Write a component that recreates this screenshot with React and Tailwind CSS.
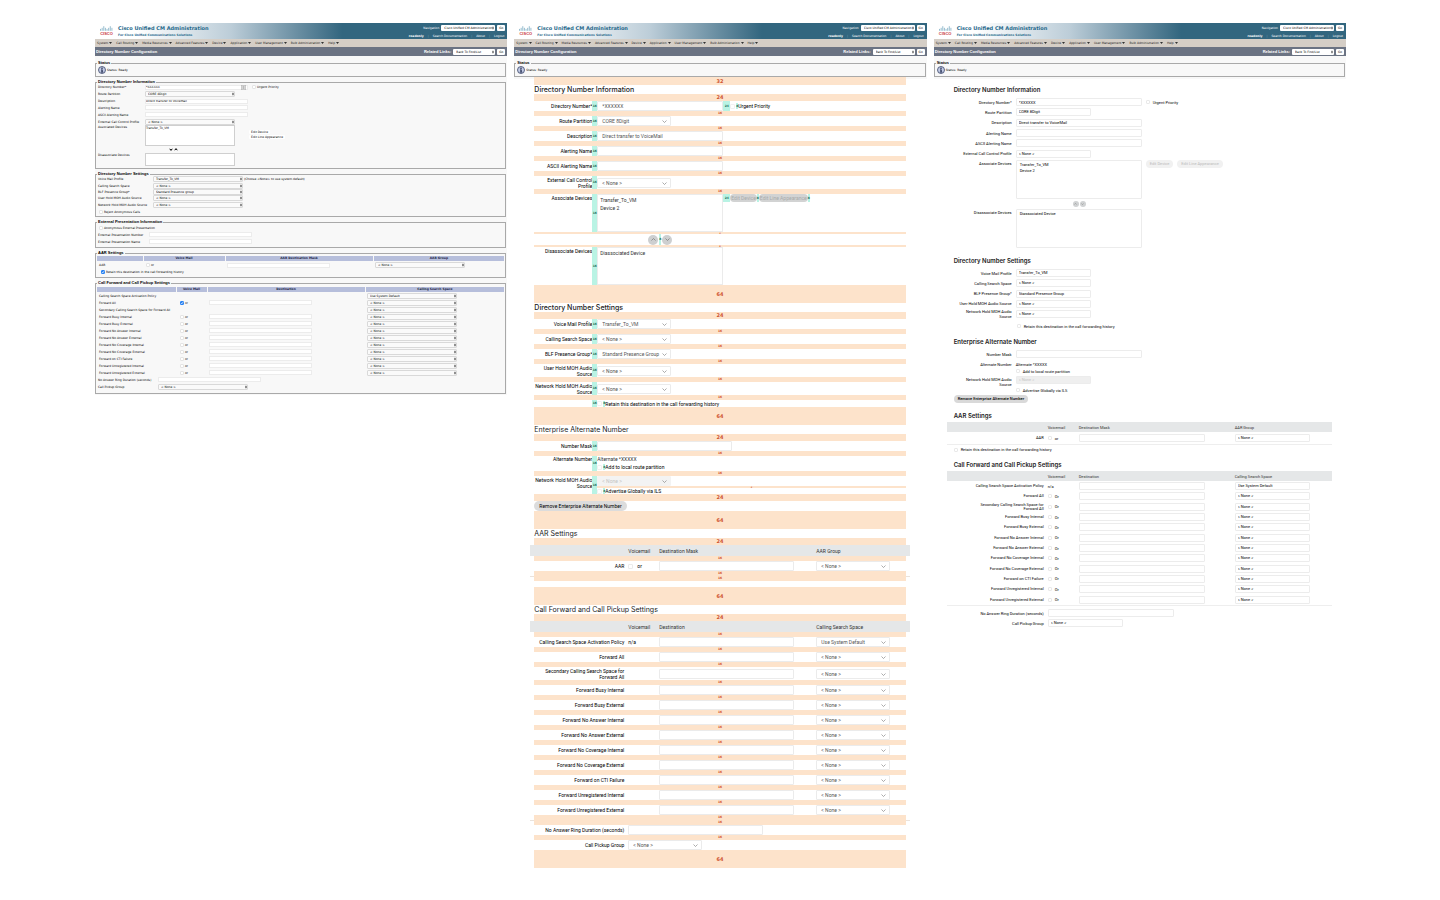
import React, { useId } from "react";

const MENUS = [
  "System", "Call Routing", "Media Resources", "Advanced Features", "Device",
  "Application", "User Management", "Bulk Administration", "Help",
];

const FORWARD_ROWS = [
  "Forward Busy Internal", "Forward Busy External", "Forward No Answer Internal",
  "Forward No Answer External", "Forward No Coverage Internal", "Forward No Coverage External",
  "Forward on CTI Failure", "Forward Unregistered Internal", "Forward Unregistered External",
];

const POLICY = "Calling Search Space Activation Policy";
const SECONDARY = "Secondary Calling Search Space for Forward All";

/* ---------- Shared header ---------- */

function CiscoLogo() {
  return (
    <svg viewBox="0 0 24 9" className="h-[5px] w-[13px]" fill="none" stroke="#4d8fae" strokeWidth="1.1" strokeLinecap="round" aria-hidden="true">
      <path d="M1 6v2M4 4v4M7 1v7M10 4v4M13 6v2M16 4v4M19 1v7M22 4v4" />
    </svg>
  );
}

function Sorter() {
  return (
    <svg viewBox="0 0 6 10" className="pointer-events-none absolute top-0 right-[1px] h-full w-[2px]" fill="#222" aria-hidden="true">
      <path d="M3 0.5 5.8 4.2H0.2zM3 9.5 0.2 5.8h5.6z" />
    </svg>
  );
}

function TinySelect({ id, label, value, className = "" }) {
  return (
    <span className={`relative block ${className}`}>
      <select id={id} aria-label={label} className="block h-full w-full appearance-none rounded-[1px] border border-[#d9d9d9] bg-[#fafafa] px-[2px] text-[3px] leading-[4px] text-black">
        <option>{value}</option>
      </select>
      <Sorter />
    </span>
  );
}

function BarSelect({ label, value, className }) {
  return (
    <span className={`relative block h-[6px] ${className}`}>
      <select aria-label={label} className="block h-full w-full appearance-none rounded-[1px] bg-white px-[3px] text-[3px] leading-[6px] text-black">
        <option>{value}</option>
      </select>
      <Sorter />
    </span>
  );
}

function GoButton() {
  return <button type="button" className="h-[6px] w-[8px] rounded-[1px] bg-white text-[3px] leading-[6px] text-black">Go</button>;
}

function AdminHeader() {
  return (
    <header className="font-['DejaVu_Sans',sans-serif] text-[3px] leading-[4px]">
      <div className="flex h-[16px] justify-between bg-linear-to-r from-white from-10% via-[#bccdd8] via-33% to-[#32667f] to-60%">
        <div className="flex items-center gap-[5px] pl-[5px]">
          <div className="flex flex-col items-center">
            <CiscoLogo />
            <span className="font-['Liberation_Sans',sans-serif] text-[4px] leading-[5px] font-bold text-[#c8323c]">CISCO</span>
          </div>
          <div className="font-bold text-[#24678a]">
            <h1 className="text-[5px] leading-[8px]">Cisco Unified CM Administration</h1>
            <p className="leading-[6px]">For Cisco Unified Communications Solutions</p>
          </div>
        </div>
        <div className="flex flex-col items-end gap-[3px] pt-[2px] pr-[2px] text-white">
          <div className="flex items-center gap-[2px]">
            <span>Navigation</span>
            <BarSelect label="Navigation" value="Cisco Unified CM Administration" className="w-[54px]" />
            <GoButton />
          </div>
          <div className="flex gap-[4px] pr-[1px]">
            <span className="font-bold">readonly</span>
            <span className="text-[#7fa3b5]">|</span>
            <a href="#search">Search Documentation</a>
            <span className="text-[#7fa3b5]">|</span>
            <a href="#about">About</a>
            <span className="text-[#7fa3b5]">|</span>
            <a href="#logout">Logout</a>
          </div>
        </div>
      </div>
      <nav className="flex h-[8px] items-center gap-[4px] bg-[#d5cec6] pl-[2px] text-[#222]">
        {MENUS.map((m) => (
          <a key={m} href="#menu" className="flex items-center gap-px whitespace-nowrap">
            {m}
            <svg viewBox="0 0 6 4" className="h-[2px] w-[3px]" fill="#333" aria-hidden="true"><path d="M0 0h6L3 4z" /></svg>
          </a>
        ))}
      </nav>
      <div className="flex h-[9px] items-center justify-between bg-[#6b7383] pr-[2px] pl-px text-white">
        <h2 className="font-['Liberation_Sans',sans-serif] text-[4px] font-bold">Directory Number Configuration</h2>
        <div className="flex items-center gap-[2px]">
          <span className="font-['Liberation_Sans',sans-serif] text-[4px] font-bold">Related Links:</span>
          <BarSelect label="Related Links" value="Back To Find/List" className="w-[42px]" />
          <GoButton />
        </div>
      </div>
    </header>
  );
}

function Group({ title, className, children }) {
  return (
    <fieldset className={`mr-px min-w-0 border border-[#a9a9a9] px-px ${className}`}>
      <legend className="px-px font-['Liberation_Sans',sans-serif] text-[4px] leading-[4px] font-bold text-black">{title}</legend>
      {children}
    </fieldset>
  );
}

function Status() {
  return (
    <Group title="Status" className="h-[16px]">
      <div className="flex items-center gap-px pt-px pl-px">
        <svg viewBox="0 0 16 16" className="size-[8px]" aria-hidden="true">
          <circle cx="8" cy="8" r="7" fill="#c3cbe6" stroke="#3b4668" strokeWidth="1.6" />
          <circle cx="8" cy="4.3" r="1.5" fill="#1b2547" />
          <path d="M6 7h3.3v4.5h1.2V13H5.8v-1.500H7V8.500H6z" fill="#1b2547" />
        </svg>
        <span className="text-[3px] leading-[4px] text-black">Status: Ready</span>
      </div>
    </Group>
  );
}

function StatusStrip() {
  return (
    <div className="h-[23px] bg-[#f8f8f8] pt-[5px] font-['DejaVu_Sans',sans-serif]">
      <Status />
    </div>
  );
}

/* ---------- Current page ---------- */

function OldRow({ label, labelWidth, kind, value = "", after, children }) {
  const id = useId();
  return (
    <div className="flex flex-1 items-center">
      <label htmlFor={id} className={`whitespace-nowrap ${labelWidth}`}>{label}</label>
      {kind === "select" && <TinySelect id={id} value={value} className="h-[6px] w-[90px]" />}
      {kind === "text" && <input id={id} type="text" defaultValue={value} className="h-[5px] w-[103px] border border-[#ececec] bg-white text-[3px] leading-[3px]" />}
      {after}
      {children}
    </div>
  );
}

function Tick({ label, checked = false, className = "" }) {
  return (
    <span className={`relative block size-[4px] ${className}`}>
      <input type="checkbox" aria-label={label} defaultChecked={checked} className="peer block size-[4px] appearance-none rounded-[1px] border border-[#e4e4e4] bg-white checked:border-[#2a83f3] checked:bg-[#2a83f3]" />
      <svg viewBox="0 0 8 8" className="pointer-events-none absolute inset-0 hidden size-[4px] peer-checked:block" fill="none" stroke="white" strokeWidth="1.4" aria-hidden="true"><path d="M2 4.200 3.500 5.800 6.200 2.200" /></svg>
    </span>
  );
}

function OldTick({ label, checked, className = "" }) {
  return (
    <label className={`flex items-center gap-px ${className}`}>
      <Tick label={label} checked={checked} />
      {label}
    </label>
  );
}

function OldHead({ cells }) {
  return (
    <thead>
      <tr className="h-[5px]">
        {cells.map((c, i) => (
          <th key={i} className="border-r border-[#f8f8f8] bg-[#b6bedb] text-center text-[3px] leading-[3px] font-bold text-[#1b2547] last:border-r-0">{c}</th>
        ))}
      </tr>
    </thead>
  );
}

function OldForwardRow({ label, or = true, checked }) {
  return (
    <tr className="h-[7px]">
      <td className="pl-[2px] whitespace-nowrap">{label}</td>
      <td>{or && <div className="flex items-center gap-px pl-[4px]"><Tick label={`${label} voice mail`} checked={checked} />or</div>}</td>
      <td>{or && <input type="text" aria-label={`${label} destination`} className="ml-[2px] block h-[5px] w-[103px] border border-[#ececec] bg-white text-[3px] leading-[3px]" />}</td>
      <td><TinySelect label={`${label} calling search space`} value={label === POLICY ? "Use System Default" : "< None >"} className="ml-[2px] h-[6px] w-[90px]" /></td>
    </tr>
  );
}

function CurrentPage() {
  const assoc = useId();
  const dis = useId();
  const w1 = "w-[47px]";
  const w2 = "w-[55px]";
  const w3 = "w-[51px]";
  const w4 = "w-[60px]";
  return (
    <section className="min-w-0 flex-1 bg-[#f8f8f8] pb-px">
      <AdminHeader />
      <div className="flex flex-col gap-[3px] pt-[5px] font-['DejaVu_Sans',sans-serif] text-[3px] leading-[4px] text-black">
        <Status />

        <Group title="Directory Number Information" className="h-[89px]">
          <div className="flex h-[41px] flex-col pl-px">
            <OldRow label="Directory Number*" labelWidth={w1} kind="text" value="*XXXXXX">
              <svg viewBox="0 0 10 10" className="-ml-[7px] size-[5px]" fill="#eee" stroke="#888" aria-hidden="true"><path d="M.5.5h9v9h-9zM3 3h4M3 5h4M3 7h4" /></svg>
              <OldTick label="Urgent Priority" className="ml-[6px]" />
            </OldRow>
            <OldRow label="Route Partition" labelWidth={w1} kind="select" value="CORE 8Digit" />
            <OldRow label="Description" labelWidth={w1} kind="text" value="Direct transfer to VoiceMail" />
            <OldRow label="Alerting Name" labelWidth={w1} kind="text" />
            <OldRow label="ASCII Alerting Name" labelWidth={w1} kind="text" />
            <OldRow label="External Call Control Profile" labelWidth={w1} kind="select" value="< None >" />
          </div>
          <div className="flex pl-px">
            <label htmlFor={assoc} className={w1}>Associated Devices</label>
            <textarea id={assoc} defaultValue="Transfer_To_VM" className="block h-[21px] w-[90px] resize-none border border-[#cfcfcf] bg-white text-[3px] leading-[4px]" />
            <div className="ml-[14px] flex flex-col items-start gap-px pt-[5px]">
              <button type="button" className="rounded-[1px] bg-white px-[2px] leading-[4px]">Edit Device</button>
              <button type="button" className="rounded-[1px] bg-white px-[2px] leading-[4px]">Edit Line Appearance</button>
            </div>
          </div>
          <div className="flex h-[7px] items-center gap-px pl-[72px]">
            <button type="button" aria-label="Move down"><svg viewBox="0 0 8 6" className="h-[3px] w-[4px]" fill="#111"><path d="M0 1l4 1.500L8 1 4 6z" /></svg></button>
            <button type="button" aria-label="Move up"><svg viewBox="0 0 8 6" className="h-[3px] w-[4px]" fill="#111"><path d="M0 5l4-1.500L8 5 4 0z" /></svg></button>
          </div>
          <div className="flex pl-px">
            <label htmlFor={dis} className={w1}>Disassociate Devices</label>
            <textarea id={dis} className="block h-[13px] w-[90px] resize-none border border-[#cfcfcf] bg-white text-[3px] leading-[4px]" />
          </div>
        </Group>

        <Group title="Directory Number Settings" className="h-[45px]">
          <div className="flex h-[32px] flex-col pl-px">
            <OldRow label="Voice Mail Profile" labelWidth={w2} kind="select" value="Transfer_To_VM" after={<span className="ml-px">(Choose &lt;None&gt; to use system default)</span>} />
            <OldRow label="Calling Search Space" labelWidth={w2} kind="select" value="< None >" />
            <OldRow label="BLF Presence Group*" labelWidth={w2} kind="select" value="Standard Presence group" />
            <OldRow label="User Hold MOH Audio Source" labelWidth={w2} kind="select" value="< None >" />
            <OldRow label="Network Hold MOH Audio Source" labelWidth={w2} kind="select" value="< None >" />
          </div>
          <OldTick label="Reject Anonymous Calls" className="h-[7px] pl-[2px]" />
        </Group>

        <Group title="External Presentation Information" className="h-[28px]">
          <div className="flex h-[21px] flex-col pl-px">
            <OldTick label="Anonymous External Presentation" className="flex-1 pl-px" />
            <OldRow label="External Presentation Number" labelWidth={w3} kind="text" />
            <OldRow label="External Presentation Name" labelWidth={w3} kind="text" />
          </div>
        </Group>

        <Group title="AAR Settings" className="h-[27px]">
          <table className="mt-px w-full table-fixed">
            <colgroup><col className="w-[46px]" /><col className="w-[82px]" /><col className="w-[148px]" /><col /></colgroup>
            <OldHead cells={["", "Voice Mail", "AAR Destination Mask", "AAR Group"]} />
            <tbody>
              <tr className="h-[8px]">
                <td className="pl-[2px]">AAR</td>
                <td><div className="flex items-center gap-px pl-[3px]"><Tick label="AAR voice mail" />or</div></td>
                <td><input type="text" aria-label="AAR destination mask" className="ml-[2px] block h-[5px] w-[103px] border border-[#ececec] bg-white text-[3px] leading-[3px]" /></td>
                <td><TinySelect label="AAR group" value="< None >" className="ml-[2px] h-[6px] w-[90px]" /></td>
              </tr>
            </tbody>
          </table>
          <OldTick label="Retain this destination in the call forwarding history" checked className="h-[6px] pl-[4px]" />
        </Group>

        <Group title="Call Forward and Call Pickup Settings" className="h-[113px]">
          <table className="mt-[2px] w-full table-fixed">
            <colgroup><col className="w-[79px]" /><col className="w-[31px]" /><col className="w-[158px]" /><col /></colgroup>
            <OldHead cells={["", "Voice Mail", "Destination", "Calling Search Space"]} />
            <tbody>
              <OldForwardRow label={POLICY} or={false} />
              <OldForwardRow label="Forward All" checked />
              <OldForwardRow label={SECONDARY} or={false} />
              {FORWARD_ROWS.map((r) => <OldForwardRow key={r} label={r} />)}
            </tbody>
          </table>
          <div className="flex h-[14px] flex-col pl-px">
            <OldRow label="No Answer Ring Duration (seconds)" labelWidth={w4} kind="text" />
            <OldRow label="Call Pickup Group" labelWidth={w4} kind="select" value="< None >" />
          </div>
        </Group>
      </div>
    </section>
  );
}

/* ---------- Spacing spec ---------- */

const BAND_HEIGHT = { 4: "h-[2px]", 8: "h-[2px]", 16: "h-[5px]", 24: "h-[7px]", 32: "h-[8px]", 64: "h-[18px]" };

function Band({ size, className = "" }) {
  const text = size >= 24 ? "text-[5px]" : size === 16 ? "text-[3px]" : "text-[2px]";
  return (
    <div className={`flex items-center justify-center bg-[#fde3cb] font-['DejaVu_Sans',sans-serif] font-bold text-[#cf5330] ${BAND_HEIGHT[size]} ${className}`}>
      <span className={`leading-none ${text}`}>{size}</span>
    </div>
  );
}

function Strip({ size }) {
  const width = size === 24 ? "w-[7px]" : size === 16 ? "w-[5px]" : "w-[2px]";
  return (
    <span className={`flex shrink-0 items-center justify-center self-stretch bg-[#b9f3e4] font-['DejaVu_Sans',sans-serif] text-[3px] leading-none font-bold text-[#1e6e5b] ${width}`}>{size}</span>
  );
}

function Chevron({ className = "", up = false }) {
  return (
    <svg viewBox="0 0 10 6" className={className} fill="none" stroke="currentColor" strokeWidth="1.4" aria-hidden="true">
      <path d={up ? "M1 5l4-4 4 4" : "M1 1l4 4 4-4"} />
    </svg>
  );
}

function SpecSelect({ id, label, value, disabled = false }) {
  return (
    <span className="relative block w-[74px]">
      <select id={id} aria-label={label} disabled={disabled} className="block h-[10px] w-full appearance-none rounded-[1px] border border-[#ebebeb] bg-white px-[4px] text-[5px] leading-[8px] text-[#555] disabled:border-[#f3f3f3] disabled:bg-[#f3f3f3] disabled:text-[#c4c4c4] disabled:opacity-100">
        <option>{value}</option>
      </select>
      <Chevron className="pointer-events-none absolute top-[4px] right-[4px] h-[3px] w-[5px] text-[#888]" />
    </span>
  );
}

function SpecInput({ id, label, value = "", className = "w-[126px]" }) {
  return <input id={id} aria-label={label} type="text" defaultValue={value} className={`block h-[10px] rounded-[1px] border border-[#ebebeb] bg-white px-[4px] text-[5px] leading-[8px] text-[#555] ${className}`} />;
}

function SpecRow({ label, height = "h-[10px]", top = false, control, children }) {
  const id = useId();
  return (
    <div className={`flex ${height} ${top ? "items-start" : "items-center"}`}>
      <label htmlFor={id} className={`w-[58px] shrink-0 text-right ${top ? "pt-px" : ""}`}>{label}</label>
      <Strip size={16} />
      {control && control(id)}
      {children}
    </div>
  );
}

function SpecTick({ label }) {
  return (
    <label className="flex h-[6px] items-center">
      <input type="checkbox" className="block size-[5px] appearance-none rounded-[1px] border border-[#f1f1f1] bg-white" />
      <span className="w-px" />
      <Strip size={8} />
      {label}
    </label>
  );
}

function SpecHeading({ children, weight = "font-normal" }) {
  return <h3 className={`h-[9px] font-['Inter',sans-serif] text-[7px] leading-[9px] text-[#222] ${weight}`}>{children}</h3>;
}

function SpecBandRow({ size }) {
  return <tr><td colSpan={4}><Band size={size} className="mx-[4px]" /></td></tr>;
}

function SpecTable({ heads, children }) {
  return (
    <table className="-mx-[4px] w-[calc(100%+8px)] table-fixed">
      <colgroup><col className="w-[98px]" /><col className="w-[31px]" /><col className="w-[157px]" /><col /></colgroup>
      <thead>
        <tr className="h-[11px] bg-[#e5e7e8] text-left text-[#333]">
          {heads.map((h, i) => <th key={i} className="font-normal">{h}</th>)}
        </tr>
      </thead>
      <tbody>{children}</tbody>
    </table>
  );
}

function SpecForwardRow({ label, value = "< None >", mail, height = "h-[10px]" }) {
  return (
    <>
      <tr className={height}>
        <td className="pr-[4px] pl-[8px] text-right leading-[6px]">{label}</td>
        <td>{mail}</td>
        <td><SpecInput label={`${label} destination`} className="w-[135px]" /></td>
        <td><SpecSelect label={`${label} group`} value={value} /></td>
      </tr>
      <SpecBandRow size={16} />
    </>
  );
}

function SpacingSpec() {
  return (
    <section className="min-w-0 flex-1">
      <AdminHeader />
      <StatusStrip />
      <div className="-mt-[2px] pr-[21px] pl-[20px] font-['Roboto',sans-serif] text-[5px] leading-[6px] text-black">
        <Band size={32} />
        <SpecHeading weight="font-medium">Directory Number Information</SpecHeading>
        <Band size={24} />
        <SpecRow label="Directory Number*" control={(id) => <SpecInput id={id} value="*XXXXXX" />}>
          <Strip size={24} />
          <SpecTick label="Urgent Priority" />
        </SpecRow>
        <Band size={16} />
        <SpecRow label="Route Partition" control={(id) => <SpecSelect id={id} value="CORE 8Digit" />} />
        <Band size={16} />
        <SpecRow label="Description" control={(id) => <SpecInput id={id} value="Direct transfer to VoiceMail" />} />
        <Band size={16} />
        <SpecRow label="Alerting Name" control={(id) => <SpecInput id={id} />} />
        <Band size={16} />
        <SpecRow label="ASCII Alerting Name" control={(id) => <SpecInput id={id} />} />
        <Band size={16} />
        <SpecRow label="External Call Control Profile" height="h-[13px]" control={(id) => <SpecSelect id={id} value="< None >" />} />
        <Band size={16} />
        <SpecRow label="Associate Devices" height="h-[38px]" top control={(id) => (
          <textarea id={id} defaultValue={"Transfer_To_VM\nDevice 2"} className="block h-full w-[126px] resize-none border border-[#ebebeb] bg-white px-[2px] pt-px text-[5px] leading-[8px] text-[#333]" />
        )}>
          <div className="flex h-[8px] items-center">
            <Strip size={24} />
            <button type="button" disabled className="h-[8px] rounded-full bg-[#d2d3d3] px-px leading-[8px] text-[#a9abab]">Edit Device</button>
            <Strip size={8} />
            <button type="button" disabled className="h-[8px] rounded-full bg-[#d2d3d3] px-px leading-[8px] text-[#a9abab]">Edit Line Appearance</button>
            <Strip size={8} />
          </div>
        </SpecRow>
        <Band size={4} />
        <div className="flex h-[11px] items-center gap-px pl-[114px]">
          <button type="button" aria-label="Move up" className="flex size-[10px] items-center justify-center rounded-full bg-[#cdcfd0] text-[#777]"><Chevron up className="h-[3px] w-[5px]" /></button>
          <Strip size={8} />
          <button type="button" aria-label="Move down" className="flex size-[10px] items-center justify-center rounded-full bg-[#cdcfd0] text-[#777]"><Chevron className="h-[3px] w-[5px]" /></button>
        </div>
        <Band size={8} />
        <SpecRow label="Disassociate Devices" height="h-[38px]" top control={(id) => (
          <textarea id={id} defaultValue="Diassociated Device" className="block h-full w-[126px] resize-none border border-[#ebebeb] bg-white px-[2px] pt-px text-[5px] leading-[8px] text-[#333]" />
        )} />
        <Band size={64} />

        <SpecHeading weight="font-medium">Directory Number Settings</SpecHeading>
        <Band size={24} />
        <SpecRow label="Voice Mail Profile" control={(id) => <SpecSelect id={id} value="Transfer_To_VM" />} />
        <Band size={16} />
        <SpecRow label="Calling Search Space" control={(id) => <SpecSelect id={id} value="< None >" />} />
        <Band size={16} />
        <SpecRow label="BLF Presence Group*" control={(id) => <SpecSelect id={id} value="Standard Presence Group" />} />
        <Band size={16} />
        <SpecRow label="User Hold MOH Audio Source" height="h-[13px]" control={(id) => <SpecSelect id={id} value="< None >" />} />
        <Band size={16} />
        <SpecRow label="Network Hold MOH Audio Source" height="h-[13px]" control={(id) => <SpecSelect id={id} value="< None >" />} />
        <Band size={16} />
        <div className="flex h-[7px] items-center pl-[58px]">
          <Strip size={16} />
          <SpecTick label="Retain this destination in the call forwarding history" />
        </div>
        <Band size={64} />

        <SpecHeading>Enterprise Alternate Number</SpecHeading>
        <Band size={24} />
        <SpecRow label="Number Mask" control={(id) => <SpecInput id={id} className="w-[135px]" />} />
        <Band size={16} />
        <div className="flex h-[15px]">
          <span className="w-[58px] text-right">Alternate Number</span>
          <Strip size={16} />
          <div>
            <p className="h-[8px] text-[#333]">Alternate *XXXXX</p>
            <SpecTick label="Add to local route partition" />
          </div>
        </div>
        <Band size={16} />
        <SpecRow label="Network Hold MOH Audio Source" height="h-[18px]" top>
          <div className="flex-1">
            <SpecSelect label="Enterprise network hold audio source" value="< None >" disabled />
            <Band size={4} />
            <SpecTick label="Advertise Globally via ILS" />
          </div>
        </SpecRow>
        <Band size={24} />
        <button type="button" className="block h-[10px] rounded-full bg-[#dcdcdc] px-[5px] leading-[10px] text-black">Remove Enterprise Alternate Number</button>
        <Band size={64} />

        <SpecHeading>AAR Settings</SpecHeading>
        <Band size={24} />
        <SpecTable heads={["", "Voicemail", "Destination Mask", "AAR Group"]}>
          <SpecBandRow size={16} />
          <SpecForwardRow label="AAR" mail={
            <label className="flex items-center gap-[4px]"><input type="checkbox" className="block size-[5px] appearance-none rounded-[1px] border border-[#ebebeb] bg-white" />or</label>
          } />
        </SpecTable>
        <div className="-mx-[4px] border-t border-[#ebe3dc] px-[4px] pb-[6px]"><Band size={16} className="-mt-px" /></div>
        <Band size={64} />

        <SpecHeading>Call Forward and Call Pickup Settings</SpecHeading>
        <Band size={24} />
        <SpecTable heads={["", "Voicemail", "Destination", "Calling Search Space"]}>
          <SpecBandRow size={16} />
          <SpecForwardRow label={POLICY} value="Use System Default" mail="n/a" />
          <SpecForwardRow label="Forward All" />
          <SpecForwardRow label={SECONDARY} height="h-[13px]" />
          {FORWARD_ROWS.map((r) => <SpecForwardRow key={r} label={r} />)}
        </SpecTable>
        <div className="-mx-[4px] border-t border-[#ebe3dc] px-[4px]"><Band size={16} className="-mt-px" /></div>
        <div className="flex h-[10px] items-center gap-[4px]">
          <label htmlFor="spec-ring" className="w-[90px] text-right">No Answer Ring Duration (seconds)</label>
          <SpecInput id="spec-ring" className="w-[135px]" />
        </div>
        <Band size={16} />
        <div className="flex h-[10px] items-center gap-[4px]">
          <label htmlFor="spec-pickup" className="w-[90px] text-right">Call Pickup Group</label>
          <SpecSelect id="spec-pickup" value="< None >" />
        </div>
        <Band size={64} />
      </div>
    </section>
  );
}

/* ---------- Redesigned page ---------- */

function NewInput({ id, label, value = "", className = "w-[126px]" }) {
  return <input id={id} aria-label={label} type="text" defaultValue={value} className={`block h-[8px] rounded-[1px] border border-[#ececec] bg-white px-[2px] text-[4px] leading-[6px] text-black ${className}`} />;
}

function NewSelect({ id, label, value, disabled = false }) {
  return (
    <select id={id} aria-label={label} disabled={disabled} className="block h-[8px] w-[75px] appearance-none rounded-[1px] border border-[#ececec] bg-white px-[2px] text-[4px] leading-[6px] text-black disabled:bg-[#efefef] disabled:text-[#c4c4c4] disabled:opacity-100">
      <option>{value}</option>
    </select>
  );
}

function NewTick({ label, className = "" }) {
  return (
    <label className={`flex items-center gap-[3px] ${className}`}>
      <input type="checkbox" className="block size-[4px] appearance-none rounded-[1px] border border-[#e9e9e9] bg-white" />
      {label}
    </label>
  );
}

function NewRow({ label, control, top = false, className = "flex-1", children }) {
  const id = useId();
  return (
    <div className={`flex gap-[4px] ${top ? "items-start" : "items-center"} ${className}`}>
      <label htmlFor={id} className={`w-[58px] shrink-0 text-right ${top ? "pt-px" : ""}`}>{label}</label>
      {control(id)}
      {children}
    </div>
  );
}

function NewHeading({ children, className }) {
  return <h3 className={`h-[8px] font-['Inter',sans-serif] text-[6px] leading-[8px] font-semibold text-[#222] ${className}`}>{children}</h3>;
}

function NewTable({ heads, height, children }) {
  return (
    <table className={`-ml-[7px] w-[calc(100%+13px)] table-fixed border-b border-[#eee] ${height}`}>
      <colgroup><col className="w-[101px]" /><col className="w-[31px]" /><col className="w-[156px]" /><col /></colgroup>
      <thead>
        <tr className="h-[10px] bg-[#e5e7e8] text-left text-[#333]">
          {heads.map((h, i) => <th key={i} className="font-normal">{h}</th>)}
        </tr>
      </thead>
      <tbody>{children}</tbody>
    </table>
  );
}

function NewTableRow({ label, mail, value = "< None >" }) {
  return (
    <tr>
      <td className="pr-[4px] pl-[20px] text-right leading-[4px]">{label}</td>
      <td>{mail ? <NewTick label={mail} /> : "n/a"}</td>
      <td><NewInput label={`${label} destination`} /></td>
      <td><NewSelect label={`${label} group`} value={value} /></td>
    </tr>
  );
}

function RedesignedPage() {
  return (
    <section className="min-w-0 flex-1">
      <AdminHeader />
      <StatusStrip />
      <div className="pr-[20px] pl-[20px] font-['Roboto',sans-serif] text-[4px] leading-[5px] text-black">
        <NewHeading className="mt-[7px]">Directory Number Information</NewHeading>
        <div className="mt-[3px] flex h-[62px] flex-col">
          <NewRow label="Directory Number*" control={(id) => <NewInput id={id} value="*XXXXXX" />}>
            <NewTick label="Urgent Priority" />
          </NewRow>
          <NewRow label="Route Partition" control={(id) => <NewSelect id={id} value="CORE 8Digit" />} />
          <NewRow label="Description" control={(id) => <NewInput id={id} value="Direct transfer to VoiceMail" />} />
          <NewRow label="Alerting Name" control={(id) => <NewInput id={id} />} />
          <NewRow label="ASCII Alerting Name" control={(id) => <NewInput id={id} />} />
          <NewRow label="External Call Control Profile" control={(id) => <NewSelect id={id} value="< None >" />} />
        </div>
        <NewRow label="Associate Devices" top className="mt-px h-[39px]" control={(id) => (
          <textarea id={id} defaultValue={"Transfer_To_VM\nDevice 2"} className="block h-full w-[126px] resize-none rounded-[1px] border border-[#ececec] bg-white px-[3px] pt-px text-[4px] leading-[6px]" />
        )}>
          <div className="flex gap-[4px]">
            <button type="button" disabled className="h-[8px] rounded-full bg-[#f1f1f1] px-[4px] leading-[8px] text-[#bbb]">Edit Device</button>
            <button type="button" disabled className="h-[8px] rounded-full bg-[#f1f1f1] px-[4px] leading-[8px] text-[#bbb]">Edit Line Appearance</button>
          </div>
        </NewRow>
        <div className="flex h-[10px] items-center gap-px pl-[119px]">
          <button type="button" aria-label="Move up" className="flex size-[6px] items-center justify-center rounded-full bg-[#d0d2d3] text-[#777]"><Chevron up className="h-[2px] w-[3px]" /></button>
          <button type="button" aria-label="Move down" className="flex size-[6px] items-center justify-center rounded-full bg-[#d0d2d3] text-[#777]"><Chevron className="h-[2px] w-[3px]" /></button>
        </div>
        <NewRow label="Disassociate Devices" top className="h-[39px]" control={(id) => (
          <textarea id={id} defaultValue="Diassociated Device" className="block h-full w-[126px] resize-none rounded-[1px] border border-[#ececec] bg-white px-[3px] pt-px text-[4px] leading-[6px]" />
        )} />

        <NewHeading className="mt-[9px]">Directory Number Settings</NewHeading>
        <div className="mt-[3px] flex h-[51px] flex-col">
          <NewRow label="Voice Mail Profile" control={(id) => <NewSelect id={id} value="Transfer_To_VM" />} />
          <NewRow label="Calling Search Space" control={(id) => <NewSelect id={id} value="< None >" />} />
          <NewRow label="BLF Presence Group*" control={(id) => <NewSelect id={id} value="Standard Presence Group" />} />
          <NewRow label="User Hold MOH Audio Source" control={(id) => <NewSelect id={id} value="< None >" />} />
          <NewRow label="Network Hold MOH Audio Source" control={(id) => <NewSelect id={id} value="< None >" />} />
        </div>
        <NewTick label="Retain this destination in the call forwarding history" className="mt-[3px] h-[8px] pl-[63px]" />

        <NewHeading className="mt-[8px]">Enterprise Alternate Number</NewHeading>
        <NewRow label="Number Mask" className="mt-[4px]" control={(id) => <NewInput id={id} />} />
        <div className="mt-[2px] flex h-[8px] items-center gap-[4px]">
          <span className="w-[58px] text-right">Alternate Number</span>
          <span>Alternate *XXXXX</span>
        </div>
        <NewTick label="Add to local route partition" className="h-[6px] pl-[62px]" />
        <NewRow label="Network Hold MOH Audio Source" top className="mt-[2px] h-[11px]" control={(id) => <NewSelect id={id} value="< None >" disabled />} />
        <NewTick label="Advertise Globally via ILS" className="h-[6px] pl-[62px]" />
        <button type="button" className="mt-[2px] block h-[8px] rounded-full bg-[#d9d9d9] px-[4px] leading-[8px] font-medium text-black">Remove Enterprise Alternate Number</button>

        <NewHeading className="mt-[9px]">AAR Settings</NewHeading>
        <div className="mt-[2px]">
          <NewTable heads={["", "Voicemail", "Destination Mask", "AAR Group"]} height="h-[23px]">
            <NewTableRow label="AAR" mail="or" />
          </NewTable>
        </div>
        <NewTick label="Retain this destination in the call forwarding history" className="mt-px h-[7px]" />

        <NewHeading className="mt-[8px]">Call Forward and Call Pickup Settings</NewHeading>
        <div className="mt-[2px]">
          <NewTable heads={["", "Voicemail", "Destination", "Calling Search Space"]} height="h-[135px]">
            <NewTableRow label={POLICY} value="Use System Default" />
            <NewTableRow label="Forward All" mail="Or" />
            <NewTableRow label={SECONDARY} mail="Or" />
            {FORWARD_ROWS.map((r) => <NewTableRow key={r} label={r} mail="Or" />)}
          </NewTable>
        </div>
        <div className="mt-[2px] flex h-[10px] items-center gap-[4px]">
          <label htmlFor="new-ring" className="w-[90px] text-right">No Answer Ring Duration (seconds)</label>
          <NewInput id="new-ring" />
        </div>
        <div className="flex h-[10px] items-center gap-[4px]">
          <label htmlFor="new-pickup" className="w-[90px] text-right">Call Pickup Group</label>
          <NewSelect id="new-pickup" value="< None >" />
        </div>
      </div>
    </section>
  );
}

export default function App() {
  return (
    <main className="flex min-h-screen items-start gap-[7px] bg-white pt-[23px] pr-[94px] pb-[32px] pl-[95px]">
      <CurrentPage />
      <SpacingSpec />
      <RedesignedPage />
    </main>
  );
}
